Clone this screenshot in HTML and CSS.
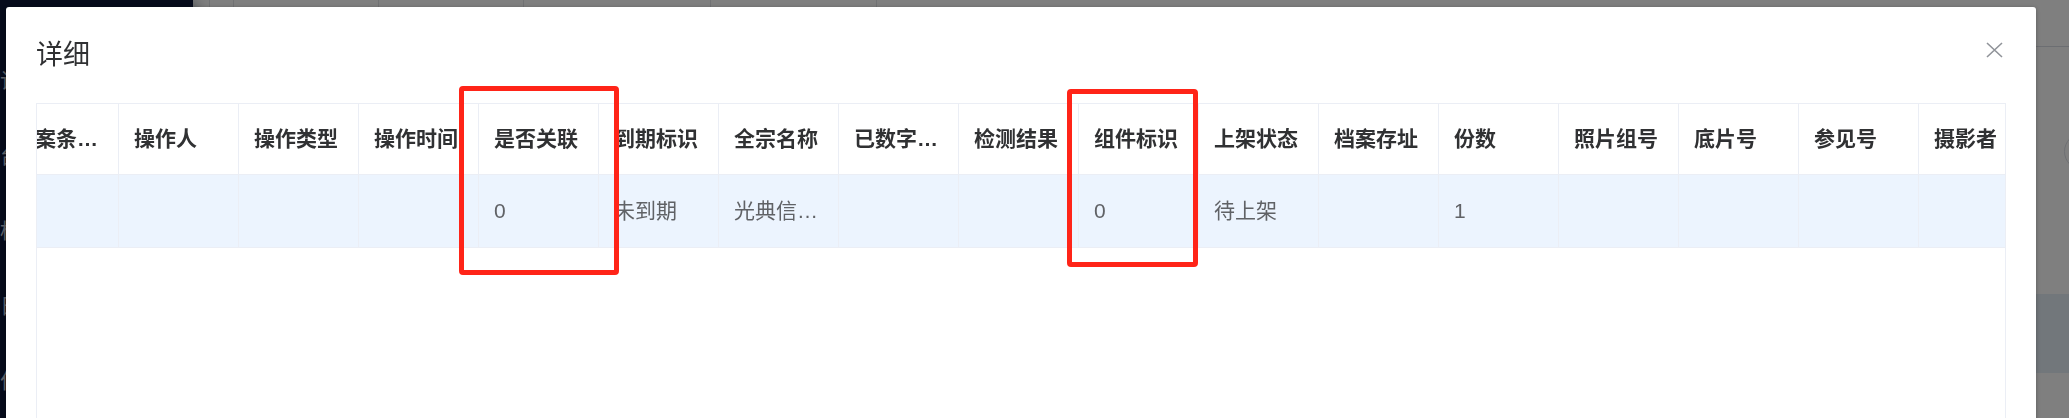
FILE: index.html
```html
<!DOCTYPE html>
<html lang="zh-CN">
<head>
  <meta charset="UTF-8" />
  <title>档案管理 - 详细</title>
  <meta name="viewport" content="width=device-width, initial-scale=1.0">
  <link rel="stylesheet" href="styles.css">
</head>
<body>
  <!-- 页面底层：侧边栏 + 主区域（被遮罩盖住） -->
  <div class="layout">
    <aside class="sidebar">
      <ul class="menu">
        <li>记录管理</li>
        <li>台账查询</li>
        <li>档案管理</li>
        <li>日志管理</li>
        <li>作业管理</li>
      </ul>
    </aside>
    <main class="main">
      <div class="topbar">
        <span class="tab"></span>
        <span class="tab">首页</span>
        <span class="tab">档案录入</span>
        <span class="tab">档案整理</span>
        <span class="tab">照片档案</span>
        <span class="tab"></span>
      </div>
      <div class="content">
        <div class="toolbar"><span class="round-btn"></span></div>
        <div class="panel"></div>
      </div>
    </main>
  </div>

  <div class="modal-mask"></div>

  <!-- 详细弹窗 -->
  <div class="dialog">
    <div class="dialog-header">
      <span class="dialog-title">详细</span>
      <button class="dialog-close" type="button" aria-label="关闭">
        <svg width="24" height="24" viewBox="0 0 24 24">
          <path d="M5 6 L20 20 M20 6 L5 20" stroke="#909399" stroke-width="1.6" fill="none" />
        </svg>
      </button>
    </div>
    <div class="dialog-body">
      <div class="table">
        <div class="table-inner">
          <div class="row row-head">
            <div class="cell">档案条目号</div>
            <div class="cell">操作人</div>
            <div class="cell">操作类型</div>
            <div class="cell">操作时间</div>
            <div class="cell">是否关联</div>
            <div class="cell">到期标识</div>
            <div class="cell">全宗名称</div>
            <div class="cell">已数字化状态</div>
            <div class="cell">检测结果</div>
            <div class="cell">组件标识</div>
            <div class="cell">上架状态</div>
            <div class="cell">档案存址</div>
            <div class="cell">份数</div>
            <div class="cell">照片组号</div>
            <div class="cell">底片号</div>
            <div class="cell">参见号</div>
            <div class="cell">摄影者</div>
            <div class="cell">拍摄时间</div>
            <div class="cell">备注</div>
          </div>
          <div class="row row-body row-current">
            <div class="cell"></div>
            <div class="cell"></div>
            <div class="cell"></div>
            <div class="cell"></div>
            <div class="cell">0</div>
            <div class="cell">未到期</div>
            <div class="cell">光典信息技术有限公司</div>
            <div class="cell"></div>
            <div class="cell"></div>
            <div class="cell">0</div>
            <div class="cell">待上架</div>
            <div class="cell"></div>
            <div class="cell">1</div>
            <div class="cell"></div>
            <div class="cell"></div>
            <div class="cell"></div>
            <div class="cell"></div>
            <div class="cell"></div>
            <div class="cell"></div>
          </div>
        </div>
      </div>
    </div>
  </div>

  <!-- 红框标注 -->
  <div class="mark mark-link"></div>
  <div class="mark mark-component"></div>
</body>
</html>
```

FILE: styles.css
```css
* {
  box-sizing: border-box;
}

html, body {
  margin: 0;
  height: 100%;
  overflow: hidden;
}

body {
  font-family: "Liberation Sans", "Noto Sans CJK SC", sans-serif;
  font-size: 21px;
  color: #606266;
  background: #fff;
}

/* 底层页面 */
.layout {
  display: flex;
  height: 100vh;
}

.sidebar {
  position: relative;
  z-index: 1;
  width: 193px;
  flex-shrink: 0;
  background: #0c1636;
  color: #c0c6d2;
  box-shadow: 2px 0 14px rgba(0, 21, 41, 0.45);
}

.menu {
  list-style: none;
  margin: 0;
  padding: 43px 0 0;
}

.menu li {
  height: 75px;
  line-height: 75px;
  white-space: nowrap;
}

.main {
  flex: 1;
  display: flex;
  flex-direction: column;
  background: #fff;
}

.topbar {
  height: 47px;
  display: flex;
  padding-left: 16px;
  border-bottom: 1px solid #d8dce5;
}

.tab {
  border-left: 1px solid #e2e4e8;
  line-height: 46px;
  padding-left: 30px;
  color: #495060;
  white-space: nowrap;
  overflow: hidden;
}

.tab:nth-child(1) { width: 24px; padding: 0; }
.tab:nth-child(2) { width: 145px; }
.tab:nth-child(3) { width: 145px; }
.tab:nth-child(4) { width: 187px; }
.tab:nth-child(5) { width: 166px; }

.content {
  flex: 1;
  display: flex;
  flex-direction: column;
}

.toolbar {
  display: flex;
  justify-content: flex-end;
  height: 37px;
  margin-top: 86px;
  margin-right: -32px;
}

.round-btn {
  width: 37px;
  height: 37px;
  border: 1px solid #dcdfe6;
  border-radius: 50%;
}

.panel {
  height: 79px;
  margin-top: 124px;
  background: #e4eef6;
}

.modal-mask {
  position: fixed;
  inset: 0;
  z-index: 2;
  background: rgba(0, 0, 0, 0.5);
}

/* 弹窗 */
.dialog {
  position: absolute;
  z-index: 3;
  left: 6px;
  top: 7px;
  width: 2030px;
  height: 620px;
  background: #fff;
  border-radius: 3px;
  box-shadow: 0 1.5px 4.5px rgba(0, 0, 0, 0.3);
}

.dialog-header {
  display: flex;
  justify-content: space-between;
  align-items: flex-start;
  padding: 30px 30px 15px;
}

.dialog-title {
  font-size: 27px;
  line-height: 36px;
  color: #303133;
}

.dialog-close {
  width: 24px;
  height: 24px;
  padding: 0;
  border: none;
  background: none;
  cursor: pointer;
}

.dialog-close svg {
  display: block;
}

.dialog-body {
  padding: 15px 30px;
}

/* 表格：横向已滚动，首列只露出一部分 */
.table {
  height: 520px;
  border: 1px solid #ebeef5;
  overflow: hidden;
}

.table-inner {
  width: max-content;
  margin-left: -38px;
}

.row {
  display: grid;
  grid-template-columns: repeat(19, 120px);
}

.cell {
  padding: 0 15px;
  border-right: 1px solid #ebeef5;
  border-bottom: 1px solid #ebeef5;
  white-space: nowrap;
  overflow: hidden;
  text-overflow: ellipsis;
}

.row-head .cell {
  height: 71px;
  line-height: 70px;
  font-weight: bold;
  color: #303133;
}

.row-body .cell {
  height: 73px;
  line-height: 72px;
}

.row-current {
  background: #ecf4fe;
}

/* 红框标注 */
.mark {
  position: absolute;
  z-index: 4;
  border: 5px solid #ff2418;
  border-radius: 4px;
}

.mark-link {
  left: 459px;
  top: 86px;
  width: 160px;
  height: 189px;
}

.mark-component {
  left: 1067px;
  top: 89px;
  width: 131px;
  height: 178px;
}
```
